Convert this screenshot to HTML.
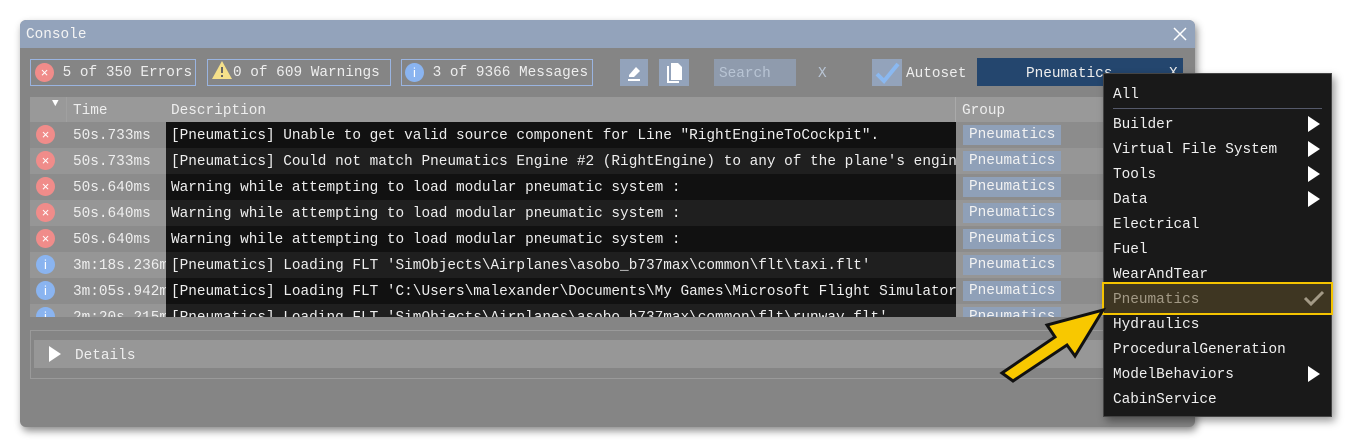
<!DOCTYPE html>
<html><head><meta charset="utf-8"><style>
*{margin:0;padding:0;box-sizing:border-box}
body{width:1352px;height:448px;background:#fff;position:relative;overflow:hidden;font-family:"Liberation Mono",monospace;font-size:14.4px;color:#eee}
.a{position:absolute;white-space:nowrap}
.win{left:20px;top:20px;width:1175px;height:407px;background:#858585;border-radius:6px;box-shadow:2px 4px 8px rgba(0,0,0,.45);overflow:hidden}
.btn{border:1px solid #9ab4e0;height:27px;top:59px;line-height:26px}
.ic{display:inline-block;width:19px;height:19px;border-radius:50%;vertical-align:middle;text-align:center;line-height:19px;font-family:"Liberation Sans",sans-serif;font-size:13px;color:#fff}
.err{background:#f08c8a}.inf{background:#8ab4f0}
.row{height:26px;line-height:28px}
.tag{background:#8fa0b8;height:20px;line-height:21px;padding:0 6px;color:#f2f2f2}
.mi{left:1113px;line-height:22px;color:#f0f0f0}
.tri{width:0;height:0;border-left:12px solid #fff;border-top:8px solid transparent;border-bottom:8px solid transparent}
</style></head><body>
<div class="a win"></div>
<div class="a" style="left:20px;top:20px;width:1175px;height:28px;background:#93a3bb;border-radius:6px 6px 0 0"></div>
<div class="a" style="left:26px;top:27px;color:#f4f4f4">Console</div>
<svg class="a" style="left:1173px;top:27px" width="14" height="14"><path d="M1 1L13 13M13 1L1 13" stroke="#fff" stroke-width="1.5"/></svg>

<div class="a btn" style="left:30px;width:166px;padding-left:4px"><span class="ic err">×</span> 5 of 350 Errors</div>
<div class="a btn" style="left:207px;width:184px;padding-left:3px"><svg width="22" height="20" style="vertical-align:-4px"><path d="M11 1L21 19H1Z" fill="#f5e08a"/><path d="M11 7v6M11 15v2" stroke="#666" stroke-width="2"/></svg>0 of 609 Warnings</div>
<div class="a btn" style="left:401px;width:192px;padding-left:3px"><span class="ic inf">i</span> 3 of 9366 Messages</div>
<div class="a" style="left:620px;top:59px;width:28px;height:27px;background:#93a3bb"></div>
<svg class="a" style="left:624px;top:63px" width="20" height="20"><path d="M5 12L12 4l4 4-6 6H5Z" fill="#fff"/><path d="M4 17h12" stroke="#fff" stroke-width="2"/></svg>
<div class="a" style="left:659px;top:59px;width:30px;height:27px;background:#93a3bb"></div>
<svg class="a" style="left:664px;top:62px" width="20" height="22"><path d="M3 4h2v15h10v2H3Z" fill="#fff"/><path d="M7 1h7l4 4v13H7Z" fill="#fff"/></svg>
<div class="a" style="left:714px;top:59px;width:82px;height:27px;background:#93a3bb;opacity:.75"></div>
<div class="a" style="left:719px;top:66px;color:#b8c4d4">Search</div>
<div class="a" style="left:818px;top:66px;color:#b8c4d4">X</div>
<div class="a" style="left:872px;top:59px;width:30px;height:27px;background:#93a3bb"></div>
<svg class="a" style="left:873px;top:60px" width="28" height="26"><path d="M4 14l7 7L25 4" stroke="#8ab8f0" stroke-width="4" fill="none"/></svg>
<div class="a" style="left:906px;top:66px">Autoset</div>
<div class="a" style="left:977px;top:58px;width:206px;height:28px;background:#24466e"></div>
<div class="a" style="left:1026px;top:66px">Pneumatics</div>
<div class="a" style="left:1169px;top:66px">X</div>

<div class="a" style="left:30px;top:97px;width:1080px;height:25px;background:#999"></div>
<div class="a" style="left:66px;top:97px;width:1px;height:220px;background:#a0a0a0"></div>
<div class="a" style="left:955px;top:97px;width:1px;height:25px;background:#aaa"></div>
<div class="a" style="left:52px;top:98px;font-size:11px;color:#fff">▼</div>
<div class="a" style="left:73px;top:103px">Time</div>
<div class="a" style="left:171px;top:103px">Description</div>
<div class="a" style="left:962px;top:103px">Group</div>
<div class="a" style="left:30px;top:122px;width:1080px;height:195px;overflow:hidden;background:#8c8c8c">
<div class="a row" style="top:0;left:136px;width:790px;background:#111"></div>
<div class="a row" style="top:26px;left:136px;width:790px;background:#1f1f1f"></div>
<div class="a row" style="top:52px;left:136px;width:790px;background:#111"></div>
<div class="a row" style="top:78px;left:136px;width:790px;background:#1f1f1f"></div>
<div class="a row" style="top:104px;left:136px;width:790px;background:#111"></div>
<div class="a row" style="top:130px;left:136px;width:790px;background:#1f1f1f"></div>
<div class="a row" style="top:156px;left:136px;width:790px;background:#111"></div>
<div class="a row" style="top:182px;left:136px;width:790px;background:#1f1f1f"></div>
<div class="a row" style="top:26px;left:0;width:136px;background:#969696"></div>
<div class="a row" style="top:78px;left:0;width:136px;background:#969696"></div>
<div class="a row" style="top:130px;left:0;width:136px;background:#969696"></div>
<div class="a row" style="top:182px;left:0;width:136px;background:#969696"></div>
<div class="a row" style="top:26px;left:926px;width:154px;background:#969696"></div>
<div class="a row" style="top:78px;left:926px;width:154px;background:#969696"></div>
<div class="a row" style="top:130px;left:926px;width:154px;background:#969696"></div>
<div class="a row" style="top:182px;left:926px;width:154px;background:#969696"></div>

<div class="a" style="top:3px;left:6px"><span class="ic err">×</span></div>
<div class="a" style="top:29px;left:6px"><span class="ic err">×</span></div>
<div class="a" style="top:55px;left:6px"><span class="ic err">×</span></div>
<div class="a" style="top:81px;left:6px"><span class="ic err">×</span></div>
<div class="a" style="top:107px;left:6px"><span class="ic err">×</span></div>
<div class="a" style="top:133px;left:6px"><span class="ic inf">i</span></div>
<div class="a" style="top:159px;left:6px"><span class="ic inf">i</span></div>
<div class="a" style="top:185px;left:6px"><span class="ic inf">i</span></div>

<div class="a row" style="top:0;left:43px">50s.733ms</div>
<div class="a row" style="top:26px;left:43px">50s.733ms</div>
<div class="a row" style="top:52px;left:43px">50s.640ms</div>
<div class="a row" style="top:78px;left:43px">50s.640ms</div>
<div class="a row" style="top:104px;left:43px">50s.640ms</div>
<div class="a row" style="top:130px;left:43px;width:93px;overflow:hidden">3m:18s.236ms</div>
<div class="a row" style="top:156px;left:43px;width:93px;overflow:hidden">3m:05s.942ms</div>
<div class="a row" style="top:182px;left:43px;width:93px;overflow:hidden">2m:20s.215ms</div>

<div class="a row" style="top:0;left:141px;width:785px;overflow:hidden">[Pneumatics] Unable to get valid source component for Line "RightEngineToCockpit".</div>
<div class="a row" style="top:26px;left:141px;width:785px;overflow:hidden">[Pneumatics] Could not match Pneumatics Engine #2 (RightEngine) to any of the plane's engines</div>
<div class="a row" style="top:52px;left:141px">Warning while attempting to load modular pneumatic system :</div>
<div class="a row" style="top:78px;left:141px">Warning while attempting to load modular pneumatic system :</div>
<div class="a row" style="top:104px;left:141px">Warning while attempting to load modular pneumatic system :</div>
<div class="a row" style="top:130px;left:141px;width:785px;overflow:hidden">[Pneumatics] Loading FLT 'SimObjects\Airplanes\asobo_b737max\common\flt\taxi.flt'</div>
<div class="a row" style="top:156px;left:141px;width:785px;overflow:hidden">[Pneumatics] Loading FLT 'C:\Users\malexander\Documents\My Games\Microsoft Flight Simulator</div>
<div class="a row" style="top:182px;left:141px;width:785px;overflow:hidden">[Pneumatics] Loading FLT 'SimObjects\Airplanes\asobo_b737max\common\flt\runway.flt'</div>

<div class="a tag" style="top:3px;left:933px">Pneumatics</div>
<div class="a tag" style="top:29px;left:933px">Pneumatics</div>
<div class="a tag" style="top:55px;left:933px">Pneumatics</div>
<div class="a tag" style="top:81px;left:933px">Pneumatics</div>
<div class="a tag" style="top:107px;left:933px">Pneumatics</div>
<div class="a tag" style="top:133px;left:933px">Pneumatics</div>
<div class="a tag" style="top:159px;left:933px">Pneumatics</div>
<div class="a tag" style="top:185px;left:933px">Pneumatics</div>
</div>

<div class="a" style="left:30px;top:330px;width:1080px;height:49px;border:1px solid #9a9a9a"></div>
<div class="a" style="left:34px;top:340px;width:1076px;height:28px;background:#979797"></div>
<div class="a tri" style="left:49px;top:346px"></div>
<div class="a" style="left:75px;top:348px">Details</div>

<div class="a" style="left:1103px;top:73px;width:229px;height:344px;background:#191919;border:1px solid #444;box-shadow:3px 4px 8px rgba(0,0,0,.4)"></div>
<div class="a" style="left:1113px;top:108px;width:209px;height:1px;background:#55596a"></div>
<div class="a" style="left:1102px;top:282px;width:231px;height:33px;background:#3e3622;border:2px solid #f5c400"></div>
<div class="a mi" style="top:84px">All</div>
<div class="a mi" style="top:114px">Builder</div>
<div class="a mi" style="top:139px">Virtual File System</div>
<div class="a mi" style="top:164px">Tools</div>
<div class="a mi" style="top:189px">Data</div>
<div class="a mi" style="top:214px">Electrical</div>
<div class="a mi" style="top:239px">Fuel</div>
<div class="a mi" style="top:264px">WearAndTear</div>
<div class="a mi" style="top:289px;color:#a39a86">Pneumatics</div>
<div class="a mi" style="top:314px">Hydraulics</div>
<div class="a mi" style="top:339px">ProceduralGeneration</div>
<div class="a mi" style="top:364px">ModelBehaviors</div>
<div class="a mi" style="top:389px">CabinService</div>
<div class="a tri" style="left:1308px;top:116px"></div>
<div class="a tri" style="left:1308px;top:141px"></div>
<div class="a tri" style="left:1308px;top:166px"></div>
<div class="a tri" style="left:1308px;top:191px"></div>
<div class="a tri" style="left:1308px;top:366px"></div>
<svg class="a" style="left:1303px;top:290px" width="22" height="16"><path d="M2 8l6 6L20 2" stroke="#a39a86" stroke-width="3" fill="none"/></svg>

<svg class="a" style="left:995px;top:300px" width="120" height="85"><path d="M7 73L60 37L52 25L108 10L80 56L72 45L18 81Z" fill="#f8c800" stroke="#111" stroke-width="3"/></svg>
</body></html>
